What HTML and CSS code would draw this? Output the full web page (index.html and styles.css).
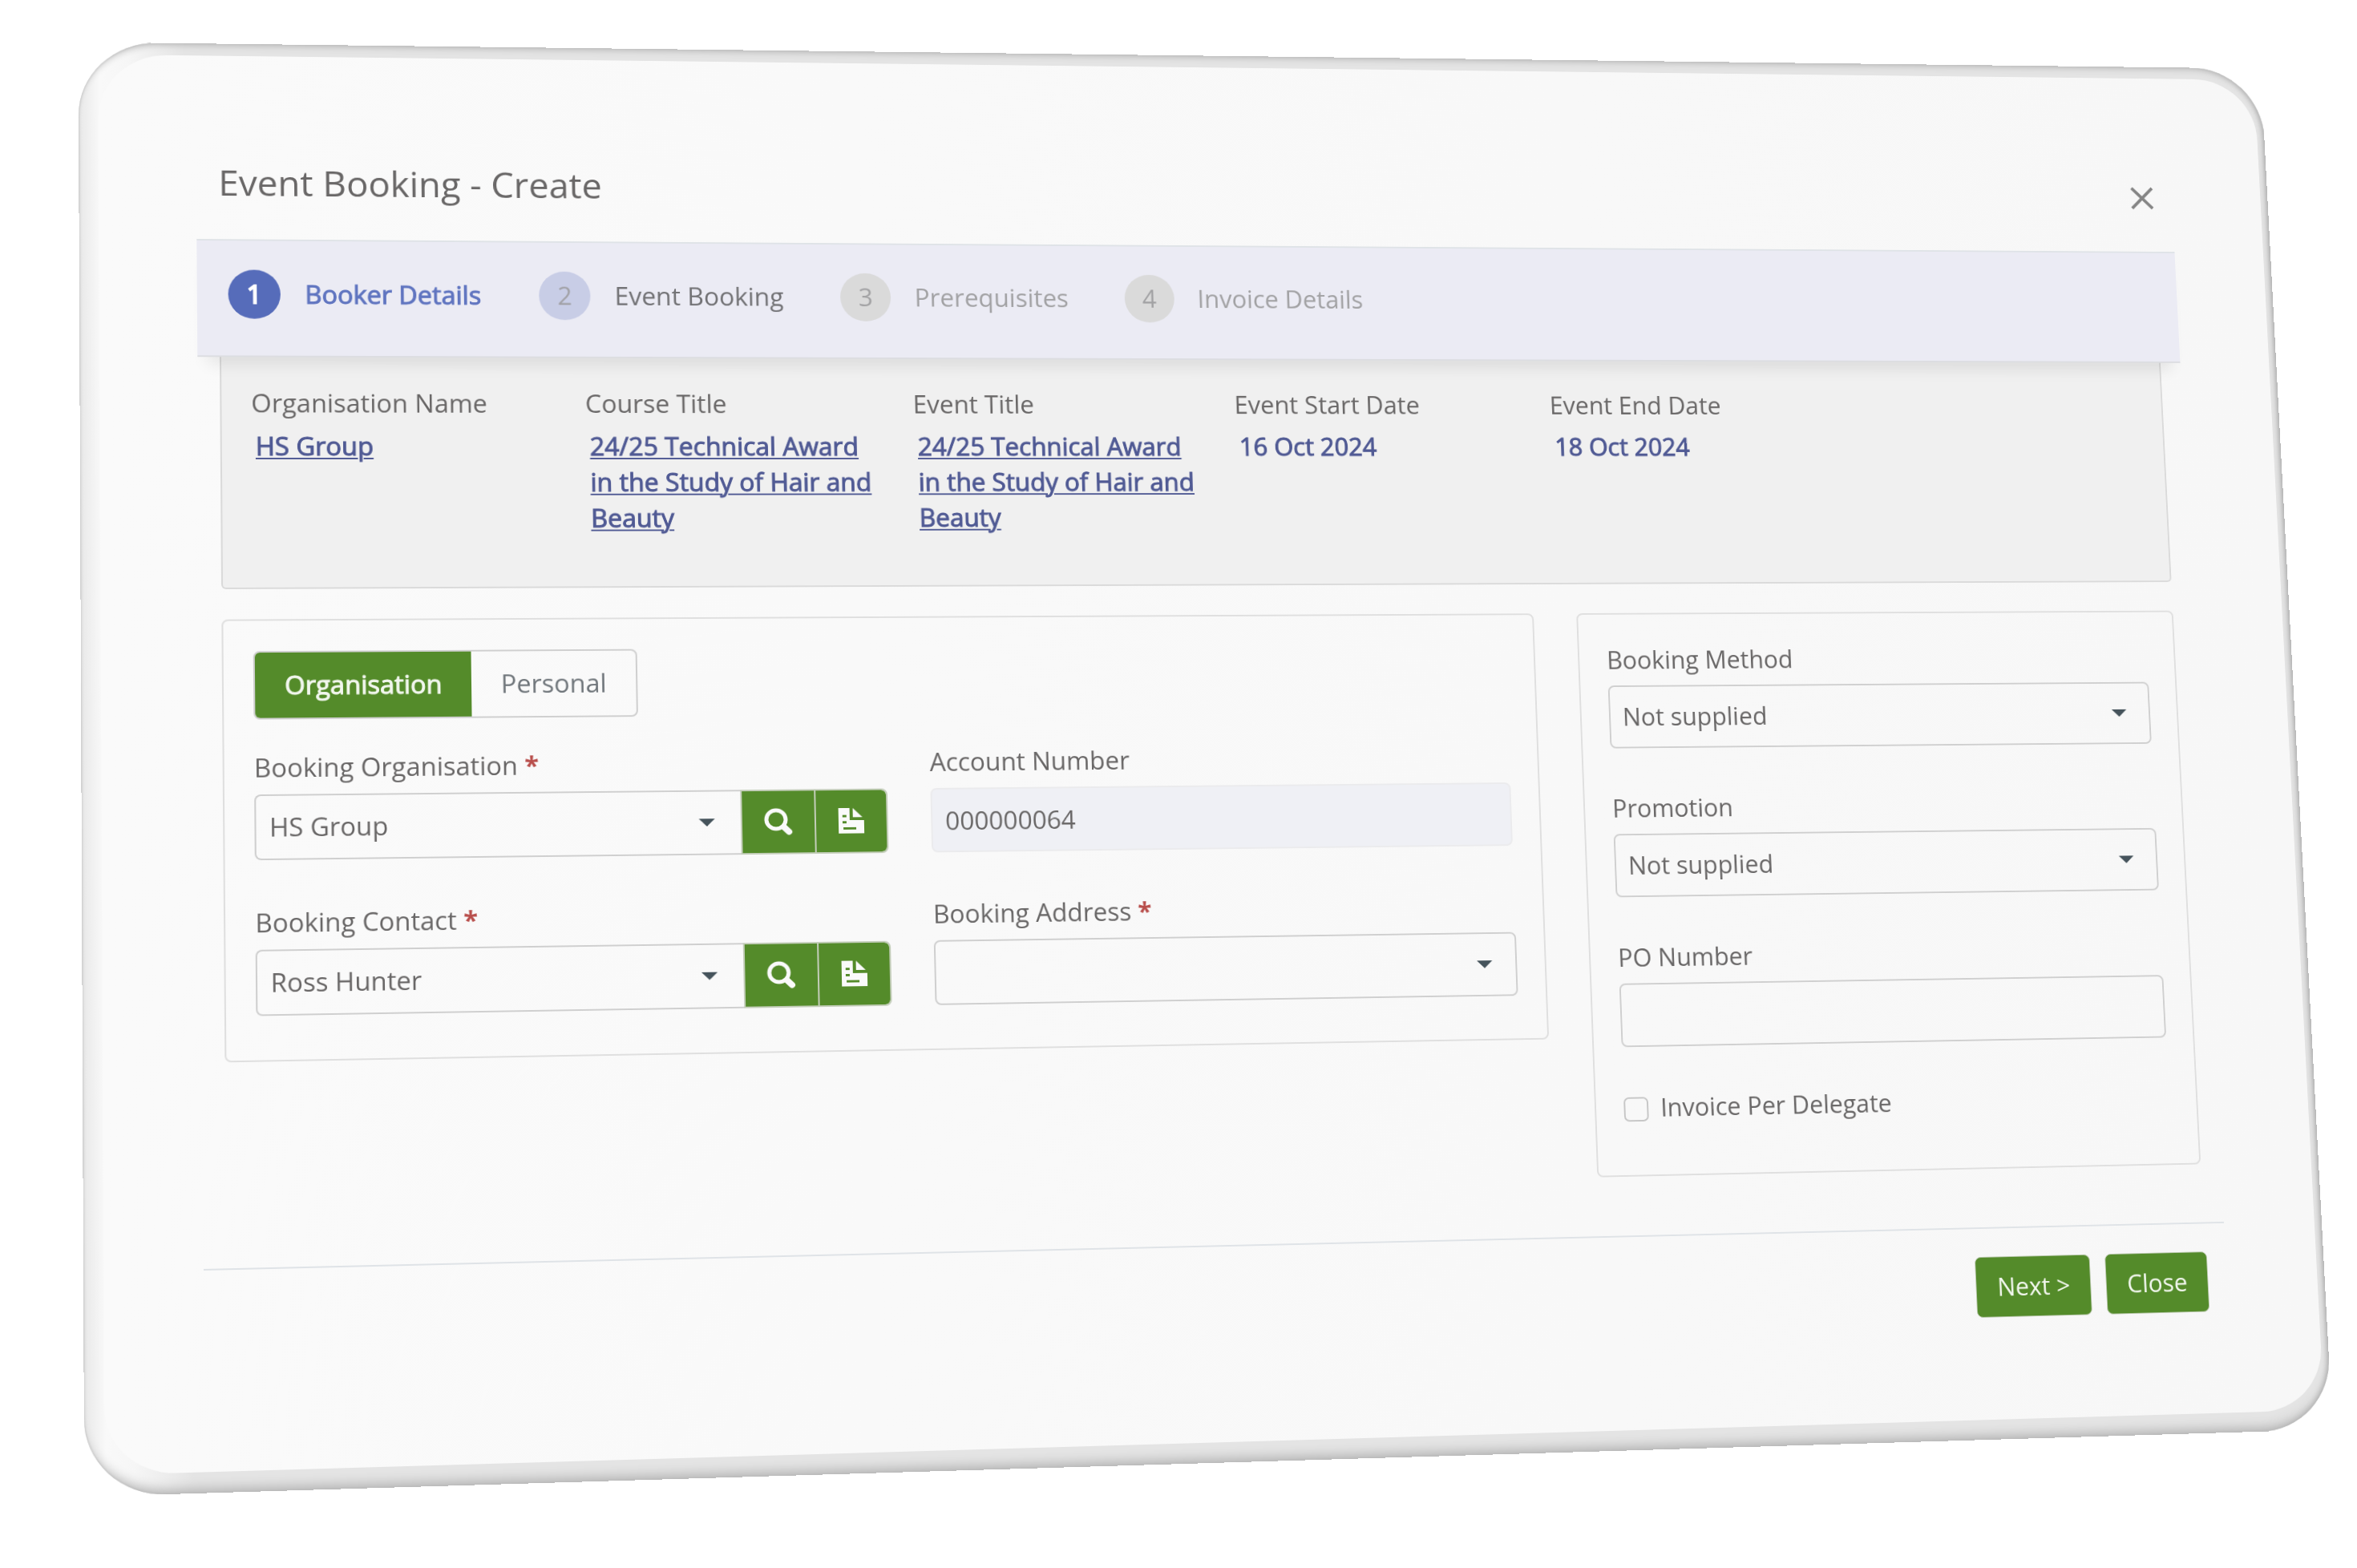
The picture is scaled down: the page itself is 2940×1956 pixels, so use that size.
FILE: index.html
```html
<!DOCTYPE html>
<html lang="en">
<head>
    <meta charset="UTF-8">
    <meta name="viewport" content="width=device-width, initial-scale=1.0">
    <title>Event Booking - Create</title>
    <link rel="stylesheet" href="styles.css">
</head>
<body>
    <svg class="sprite" aria-hidden="true">
        <symbol id="icon-search" viewBox="0 0 36 36">
            <circle cx="15" cy="15" r="12" fill="none" stroke="currentColor" stroke-width="5"/>
            <path d="M25 25l6 6" fill="none" stroke="currentColor" stroke-width="8" stroke-linecap="round"/>
        </symbol>
        <symbol id="icon-document" viewBox="0 0 36 36">
            <path fill="currentColor" fill-rule="evenodd" d="M2 1h14v16h18v17H2zM7 10v3h5v-3zM7 18v3h5v-3zM8 26v3h16v-3z"/>
            <path fill="currentColor" d="M20 1l12 12H20z"/>
        </symbol>
    </svg>

    <div class="stage">
        <div class="tablet">
            <form class="dialog">
                <header class="dialog-header">
                    <h1>Event Booking - Create</h1>
                    <button type="button" class="dismiss" aria-label="Close dialog">
                        <svg viewBox="0 0 32 32"><path d="M2 2l28 28M30 2L2 30" fill="none" stroke="currentColor" stroke-width="4"/></svg>
                    </button>
                </header>

                <ol class="stepper">
                    <li class="step active"><span class="step-number">1</span><span class="step-name">Booker Details</span></li>
                    <li class="step next"><span class="step-number">2</span><span class="step-name">Event Booking</span></li>
                    <li class="step"><span class="step-number">3</span><span class="step-name">Prerequisites</span></li>
                    <li class="step"><span class="step-number">4</span><span class="step-name">Invoice Details</span></li>
                </ol>

                <div class="dialog-body">
                    <dl class="summary">
                        <div class="summary-item">
                            <dt>Organisation Name</dt>
                            <dd><a href="#">HS Group</a></dd>
                        </div>
                        <div class="summary-item">
                            <dt>Course Title</dt>
                            <dd><a href="#">24/25 Technical Award in the Study of Hair and Beauty</a></dd>
                        </div>
                        <div class="summary-item">
                            <dt>Event Title</dt>
                            <dd><a href="#">24/25 Technical Award in the Study of Hair and Beauty</a></dd>
                        </div>
                        <div class="summary-item">
                            <dt>Event Start Date</dt>
                            <dd>16 Oct 2024</dd>
                        </div>
                        <div class="summary-item">
                            <dt>Event End Date</dt>
                            <dd>18 Oct 2024</dd>
                        </div>
                    </dl>

                    <div class="panels">
                        <section class="panel panel-wide">
                            <div class="toggle">
                                <button type="button" class="selected">Organisation</button>
                                <button type="button">Personal</button>
                            </div>
                            <div class="fields">
                                <div class="field">
                                    <label for="organisation">Booking Organisation <span class="required">*</span></label>
                                    <div class="input-group">
                                        <div class="select">
                                            <select id="organisation"><option>HS Group</option></select>
                                        </div>
                                        <button type="button" class="icon-button" aria-label="Search"><svg><use href="#icon-search"/></svg></button>
                                        <button type="button" class="icon-button" aria-label="Open record"><svg><use href="#icon-document"/></svg></button>
                                    </div>
                                </div>
                                <div class="field">
                                    <label for="account">Account Number</label>
                                    <input type="text" id="account" value="000000064" disabled>
                                </div>
                                <div class="field">
                                    <label for="contact">Booking Contact <span class="required">*</span></label>
                                    <div class="input-group">
                                        <div class="select">
                                            <select id="contact"><option>Ross Hunter</option></select>
                                        </div>
                                        <button type="button" class="icon-button" aria-label="Search"><svg><use href="#icon-search"/></svg></button>
                                        <button type="button" class="icon-button" aria-label="Open record"><svg><use href="#icon-document"/></svg></button>
                                    </div>
                                </div>
                                <div class="field">
                                    <label for="address">Booking Address <span class="required">*</span></label>
                                    <div class="select">
                                        <select id="address"><option></option></select>
                                    </div>
                                </div>
                            </div>
                        </section>

                        <section class="panel">
                            <div class="field">
                                <label for="method">Booking Method</label>
                                <div class="select">
                                    <select id="method"><option>Not supplied</option></select>
                                </div>
                            </div>
                            <div class="field">
                                <label for="promotion">Promotion</label>
                                <div class="select">
                                    <select id="promotion"><option>Not supplied</option></select>
                                </div>
                            </div>
                            <div class="field">
                                <label for="po">PO Number</label>
                                <input type="text" id="po">
                            </div>
                            <div class="check">
                                <input type="checkbox" id="per-delegate">
                                <label for="per-delegate">Invoice Per Delegate</label>
                            </div>
                        </section>
                    </div>
                </div>

                <footer class="dialog-footer">
                    <button type="button" class="button">Next &gt;</button>
                    <button type="button" class="button">Close</button>
                </footer>
            </form>
        </div>
    </div>
</body>
</html>
```

FILE: styles.css
```css
* {
    box-sizing: border-box;
}
body {
    margin: 0;
    background: #fff;
    color: #696767;
    font-family: "Open Sans", "Noto Sans", sans-serif;
    font-size: 32px;
    line-height: 48px;
}
button, input, select {
    font: inherit;
    color: inherit;
}
h1, ol, dl, dd {
    margin: 0;
    padding: 0;
}
.sprite {
    display: none;
}
.stage {
    padding: 40px 52px 0;
}

/* The whole dialog is tilted in space: left side and bottom edge nearer */
.tablet {
    padding: 16px 10px 26px 24px;
    border-radius: 96px;
    background: linear-gradient(to right, #e8e8e8, #f9f9f9 26px, #f6f6f6 60px, #e4e4e4 130px);
    box-shadow:
        inset 0 8px 8px -5px #c0c0c0,
        inset 0 -16px 14px -10px #b8b8b8,
        inset -5px 0 6px -2px #b4b4b4,
        inset 0 0 3px #b4b4b4;
    transform-origin: 0 0;
    transform: matrix3d(1.025681, 0.012785, 0, 0.0000237813, 0.00316, 0.947735, 0, -0.0000169992, 0, 0, 1, 0, 45.622, 12.402, 0, 1);
}
.dialog {
    padding: 137px 122px 134px 119px;
    border-radius: 84px;
    background: linear-gradient(to right, #fafafa, #f7f7f7);
}
.dialog-header {
    display: flex;
    align-items: center;
    justify-content: space-between;
    padding: 0 25px 44px 27px;
}
.dialog-header h1 {
    font-size: 45px;
    line-height: 60px;
    font-weight: 400;
}
.dismiss {
    width: 32px;
    height: 32px;
    padding: 0;
    border: 0;
    background: none;
    color: #858585;
}
.dismiss svg {
    display: block;
}

.stepper {
    position: relative;
    display: flex;
    gap: 72px;
    padding: 38px 38px 48px;
    list-style: none;
    background: #ebebf4;
    border-top: 2px solid #dfe3e7;
    border-bottom: 2px solid #dcdde1;
    box-shadow: 0 22px 18px -12px rgba(0, 0, 0, 0.08);
}
.step {
    display: flex;
    align-items: center;
    gap: 30px;
    color: #a2a2a4;
}
.step-number {
    width: 64px;
    height: 64px;
    line-height: 64px;
    border-radius: 50%;
    text-align: center;
    background: #dadada;
}
.step.next {
    color: #727275;
}
.step.next .step-number {
    background: #c8cde6;
    color: #a2a2a8;
}
.step.active {
    color: #6075c0;
    -webkit-text-stroke: 1px;
}
.step.active .step-number {
    background: #566cba;
    color: #fff;
    -webkit-text-stroke: 2px;
}

.dialog-body {
    padding: 0 27px;
}
.summary {
    display: grid;
    grid-template-columns: repeat(6, 1fr);
    padding: 36px 16px 66px 18px;
    background: #f0f0f0;
    border: 2px solid #dadada;
    border-top: 0;
    border-radius: 0 0 6px 6px;
}
.summary-item {
    padding: 0 30px 0 18px;
}
.summary-item dt {
    margin-bottom: 8px;
}
.summary-item dd {
    padding-left: 5px;
    line-height: 47px;
    color: #505a94;
    -webkit-text-stroke: 1px;
}
.summary-item a {
    color: inherit;
    text-underline-offset: 3px;
    text-decoration-thickness: 2px;
}

.panels {
    display: grid;
    grid-template-columns: repeat(3, 1fr);
    align-items: start;
    gap: 56px;
    padding: 39px 0 77px;
}
.panel {
    padding: 37px 36px 0;
    border: 2px solid #dfdfdf;
    border-radius: 8px;
}
.panel-wide {
    grid-column: span 2;
    padding-top: 39px;
}
.toggle {
    display: inline-flex;
    height: 88px;
    margin-bottom: 38px;
    border: 2px solid #cfcfcf;
    border-radius: 8px;
    overflow: hidden;
    vertical-align: top;
}
.toggle button {
    padding: 0 36px;
    border: 0;
    background: none;
    color: #70767b;
}
.toggle .selected {
    background: #548b2a;
    color: #f2f7ee;
    -webkit-text-stroke: 1px;
}
.fields {
    display: grid;
    grid-template-columns: 21fr 20fr;
    column-gap: 54px;
}
.field {
    margin-bottom: 56px;
}
.field label {
    display: block;
    margin-bottom: 10px;
}
.required {
    color: #b84e4b;
    font-weight: 700;
}
.select {
    position: relative;
    flex: 1;
}
.select::after {
    content: "";
    position: absolute;
    top: 37px;
    right: 32px;
    border: 10px solid transparent;
    border-top-color: #46545c;
    border-bottom: 0;
    pointer-events: none;
}
select,
input[type="text"] {
    display: block;
    width: 100%;
    height: 84px;
    padding: 0 16px;
    border: 2px solid #cfcfcf;
    border-radius: 8px;
    background: none;
    appearance: none;
    opacity: 1;
}
input[type="text"]:disabled {
    background: #eff0f5;
    border-color: #ebebed;
    color: #696767;
}
.input-group {
    display: flex;
}
.input-group select {
    border-right: 0;
    border-radius: 8px 0 0 8px;
}
.icon-button {
    display: flex;
    align-items: center;
    justify-content: center;
    width: 92px;
    height: 84px;
    padding: 0;
    border: 2px solid #c3cdb9;
    border-right-width: 0;
    background: #548b2a;
    background-clip: padding-box;
    color: #fafafa;
}
.icon-button:last-child {
    border-right-width: 2px;
    border-radius: 0 8px 8px 0;
}
.icon-button svg {
    width: 36px;
    height: 36px;
}
.check {
    display: flex;
    align-items: center;
    gap: 16px;
    padding: 2px 0 62px;
}
.check label {
    padding-bottom: 4px;
    line-height: 44px;
}
.check input {
    width: 32px;
    height: 32px;
    margin: 0;
    border: 2px solid #c6c6c6;
    border-radius: 7px;
    appearance: none;
}

.dialog-footer {
    display: flex;
    justify-content: flex-end;
    gap: 20px;
    padding: 37px 25px 0;
    border-top: 2px solid #dfe3e7;
}
.button {
    height: 80px;
    padding: 0 27px;
    border: 1px solid #b9c8ac;
    border-radius: 8px;
    background: #548b2a;
    color: #f2f7ee;
}
```
